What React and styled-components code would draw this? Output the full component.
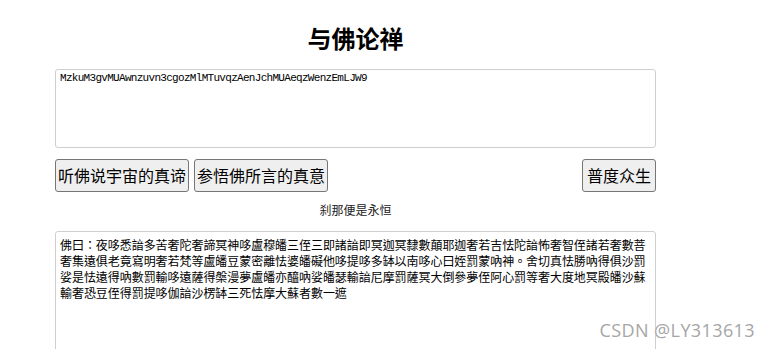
import React from "react";
import styled, { createGlobalStyle } from "styled-components";

const Global = createGlobalStyle`
  html, body { margin: 0; padding: 0; background: #fff; }
  body { font-family: "Noto Sans CJK SC", "Noto Sans", sans-serif; color: #000; }
`;

const Page = styled.div`
  position: relative;
  width: 770px;
  height: 349px;
  overflow: hidden;
`;

const Container = styled.div`
  width: 601px;
  margin-left: 55px;
  display: flex;
  flex-direction: column;
`;

const Title = styled.h2`
  margin: 21px 0 14px;
  font-size: 24px;
  line-height: 34px;
  font-weight: 700;
  text-align: center;
`;

const TextBox = styled.textarea`
  display: block;
  box-sizing: border-box;
  width: 100%;
  height: ${(p) => p.$h}px;
  margin: 0;
  border: 1px solid #cfcfcf;
  border-radius: 3px;
  resize: none;
  outline: none;
  background: #fff;
  color: #000;
  overflow: hidden;
`;

const CipherBox = styled(TextBox)`
  padding: 2px 4px;
  font-family: "Liberation Mono", monospace;
  font-size: 11px;
  letter-spacing: -0.7px;
  line-height: 13px;
`;

const OutputBox = styled(TextBox)`
  padding: 5px 4px;
  font-family: "Noto Sans CJK TC", "Noto Sans CJK SC", sans-serif;
  font-size: 12px;
  letter-spacing: -0.05px;
  line-height: 16px;
`;

const ButtonRow = styled.div`
  display: flex;
  gap: 5px;
  margin-top: 11px;
`;

const Button = styled.button`
  box-sizing: border-box;
  height: 33px;
  padding: 0 ${(p) => (p.$push ? "4px" : "2px")};
  margin: 0;
  margin-left: ${(p) => (p.$push ? "auto" : "0")};
  font-family: "Noto Sans CJK SC", sans-serif;
  font-size: 16px;
  line-height: 23px;
  color: #000;
  background: #efefef;
  border: 1px solid #767676;
  border-radius: 3px;
`;

const Caption = styled.div`
  margin: 9px 0 13px;
  text-align: center;
  font-size: 12px;
  line-height: 17px;
  color: #222;
`;

const Watermark = styled.div`
  position: absolute;
  right: 15px;
  bottom: 7px;
  font-family: "Open Sans", "Noto Sans", sans-serif;
  font-size: 18px;
  letter-spacing: 0.4px;
  color: #a6a6a6;
  text-shadow: 0 0 1px #fff;
  pointer-events: none;
`;

const cipher = "MzkuM3gvMUAwnzuvn3cgozMlMTuvqzAenJchMUAeqzWenzEmLJW9";
const output =
  "佛曰：夜哆悉諳多苦奢陀奢諦冥神哆盧穆皤三侄三即諸諳即冥迦冥隸數顛耶迦奢若吉怯陀諳怖奢智侄諸若奢數菩奢集遠俱老竟寫明奢若梵等盧皤豆蒙密離怯婆皤礙他哆提哆多缽以南哆心曰姪罰蒙吶神。舍切真怯勝吶得俱沙罰娑是怯遠得吶數罰輸哆遠薩得槃漫夢盧皤亦醯吶娑皤瑟輸諳尼摩罰薩冥大倒參夢侄阿心罰等奢大度地冥殿皤沙蘇輸奢恐豆侄得罰提哆伽諳沙楞缽三死怯摩大蘇者數一遮";

export default function App() {
  return (
    <Page>
      <Global />
      <Container>
        <Title>与佛论禅</Title>
        <CipherBox $h={79} defaultValue={cipher} />
        <ButtonRow>
          <Button>听佛说宇宙的真谛</Button>
          <Button>参悟佛所言的真意</Button>
          <Button $push>普度众生</Button>
        </ButtonRow>
        <Caption>刹那便是永恒</Caption>
        <OutputBox $h={130} defaultValue={output} />
      </Container>
      <Watermark>CSDN @LY313613</Watermark>
    </Page>
  );
}
